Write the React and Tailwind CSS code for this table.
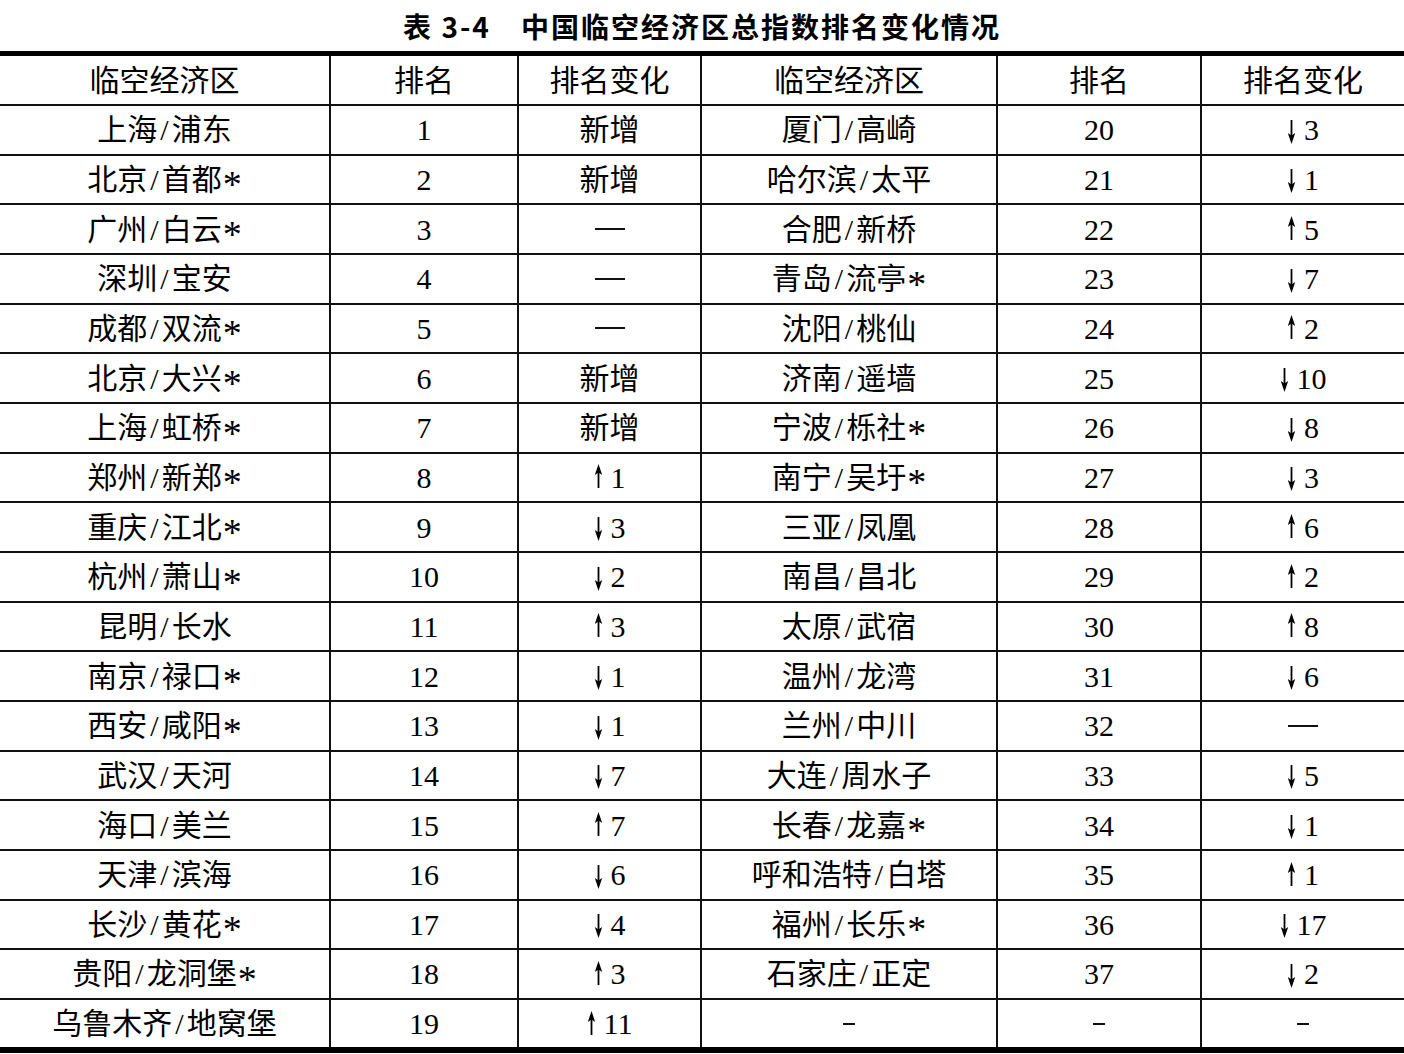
const rows = [
  ["上海/浦东", "1", "新增", "厦门/高崎", "20", "↓3"],
  ["北京/首都*", "2", "新增", "哈尔滨/太平", "21", "↓1"],
  ["广州/白云*", "3", "—", "合肥/新桥", "22", "↑5"],
  ["深圳/宝安", "4", "—", "青岛/流亭*", "23", "↓7"],
  ["成都/双流*", "5", "—", "沈阳/桃仙", "24", "↑2"],
  ["北京/大兴*", "6", "新增", "济南/遥墙", "25", "↓10"],
  ["上海/虹桥*", "7", "新增", "宁波/栎社*", "26", "↓8"],
  ["郑州/新郑*", "8", "↑1", "南宁/吴圩*", "27", "↓3"],
  ["重庆/江北*", "9", "↓3", "三亚/凤凰", "28", "↑6"],
  ["杭州/萧山*", "10", "↓2", "南昌/昌北", "29", "↑2"],
  ["昆明/长水", "11", "↑3", "太原/武宿", "30", "↑8"],
  ["南京/禄口*", "12", "↓1", "温州/龙湾", "31", "↓6"],
  ["西安/咸阳*", "13", "↓1", "兰州/中川", "32", "—"],
  ["武汉/天河", "14", "↓7", "大连/周水子", "33", "↓5"],
  ["海口/美兰", "15", "↑7", "长春/龙嘉*", "34", "↓1"],
  ["天津/滨海", "16", "↓6", "呼和浩特/白塔", "35", "↑1"],
  ["长沙/黄花*", "17", "↓4", "福州/长乐*", "36", "↓17"],
  ["贵阳/龙洞堡*", "18", "↑3", "石家庄/正定", "37", "↓2"],
  ["乌鲁木齐/地窝堡", "19", "↑11", "-", "-", "-"],
];

const headers = ["临空经济区", "排名", "排名变化", "临空经济区", "排名", "排名变化"];

const colW = ["w-[329px]", "w-[188px]", "w-[183px]", "w-[296px]", "w-[204px]", "w-[204px]"];

function Arrow({ up }) {
  return (
    <svg
      width="9"
      height="24"
      viewBox="0 0 9 24"
      className={up ? "-translate-y-[1px]" : "translate-y-[2px]"}
    >
      {up ? (
        <>
          <line x1="4.5" y1="6" x2="4.5" y2="24" stroke="#000" strokeWidth="1.8" />
          <polygon points="0.8,11 4.5,0 8.2,11 4.5,8.5" fill="#000" />
        </>
      ) : (
        <>
          <line x1="4.5" y1="0" x2="4.5" y2="18" stroke="#000" strokeWidth="1.8" />
          <polygon points="0.8,13 4.5,24 8.2,13 4.5,15.5" fill="#000" />
        </>
      )}
    </svg>
  );
}

function Name({ text }) {
  const parts = [];
  let buf = "";
  for (const ch of text) {
    if (ch === "/" || ch === "*") {
      if (buf) parts.push(buf);
      buf = "";
      parts.push(ch);
    } else buf += ch;
  }
  if (buf) parts.push(buf);
  return (
    <span className="inline-flex items-center">
      {parts.map((p, i) =>
        p === "/" ? (
          <span key={i} className="mx-[3px]">/</span>
        ) : p === "*" ? (
          <span key={i} className="inline-block text-[38px] leading-none translate-y-[5px] ml-[1px]">*</span>
        ) : (
          <span key={i}>{p}</span>
        )
      )}
    </span>
  );
}

function Cell({ value }) {
  if (value.startsWith("↑") || value.startsWith("↓")) {
    return (
      <span className="inline-flex items-center gap-[8px]">
        <Arrow up={value.startsWith("↑")} />
        <span>{value.slice(1)}</span>
      </span>
    );
  }
  if (value === "—") {
    return <span className="block w-[30px] h-[2px] bg-[#111]" aria-label="—"></span>;
  }
  if (value === "-") {
    return <span className="block w-[12px] h-[2px] bg-[#111]" aria-label="-"></span>;
  }
  if (/[\u4e00-\u9fff]/.test(value)) return <Name text={value} />;
  return <span>{value}</span>;
}

export default function App() {
  return (
    <div
      className="w-[1404px] h-[1054px] bg-white text-black overflow-hidden"
      style={{ fontFamily: '"Liberation Serif", "Noto Sans CJK SC", serif' }}
    >
      <div
        className="h-[51px] flex items-center justify-center text-[28px] font-bold tracking-[2px]"
        style={{ fontFamily: '"Noto Sans CJK SC", sans-serif' }}
      >
        <span>表 3-4</span>
        <span className="ml-[30px]">中国临空经济区总指数排名变化情况</span>
      </div>
      <div className="border-t-[5px] border-b-[6px] border-black">
        <div className="flex h-[48px] text-[30px]">
          {headers.map((h, i) => (
            <div
              key={i}
              className={`${colW[i]} flex items-center justify-center ${i > 0 ? "border-l-2 border-[#111]" : ""}`}
            >
              {h}
            </div>
          ))}
        </div>
        {rows.map((r, ri) => (
          <div key={ri} className="flex h-[49.67px] border-t-2 border-[#111] text-[30px]">
            {r.map((v, i) => (
              <div
                key={i}
                className={`${colW[i]} flex items-center justify-center ${i > 0 ? "border-l-2 border-[#111]" : ""}`}
              >
                <Cell value={v} />
              </div>
            ))}
          </div>
        ))}
      </div>
    </div>
  );
}
